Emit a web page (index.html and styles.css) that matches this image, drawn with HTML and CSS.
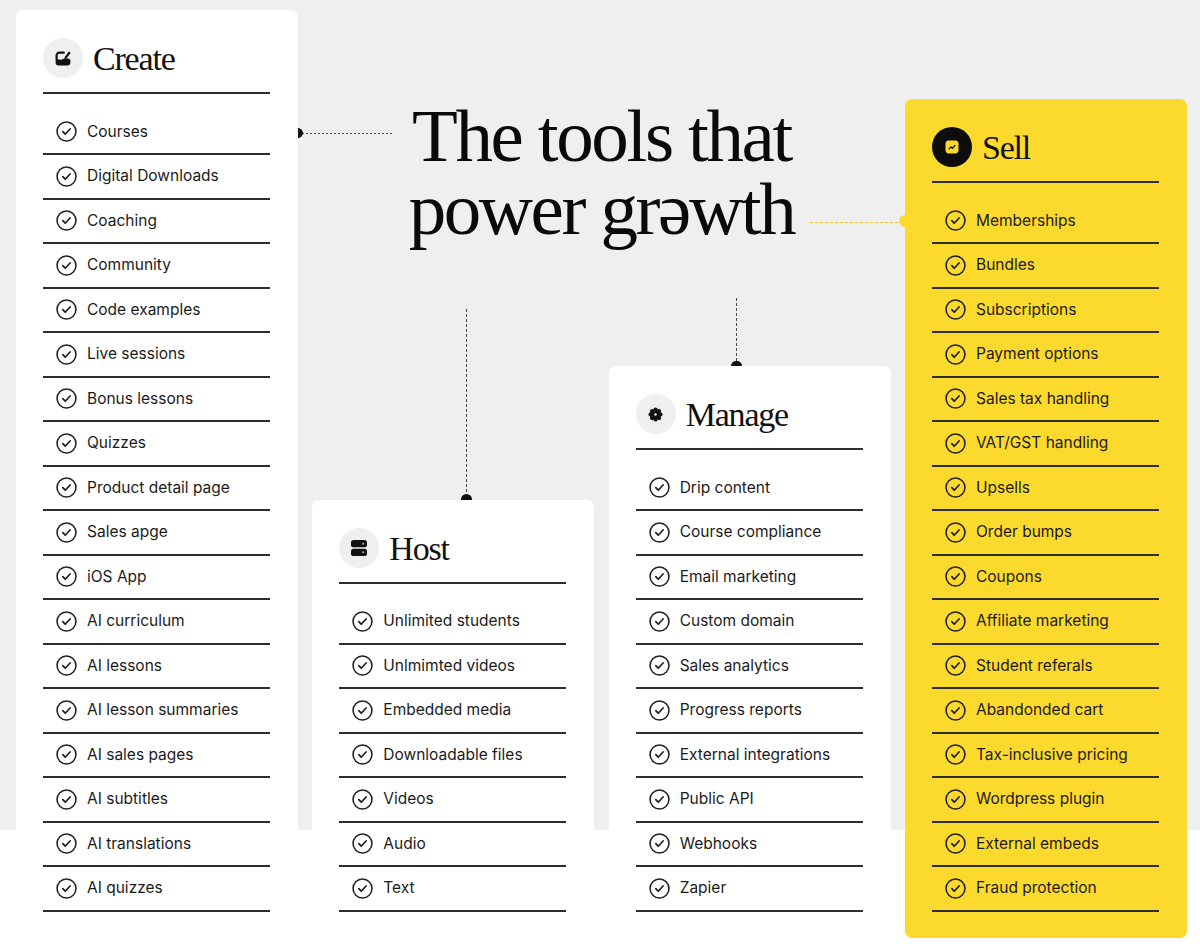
FILE: index.html
```html
<!DOCTYPE html>
<html lang="en">
<head>
<meta charset="utf-8">
<title>The tools that power growth</title>
<link rel="stylesheet" href="styles.css">
</head>
<body>
<svg class="defs" aria-hidden="true">
  <symbol id="chk" viewBox="0 0 20 20">
    <circle cx="10" cy="10" r="9" fill="none" stroke="currentColor" stroke-width="1.5"/>
    <path d="M6.5 10.2l2.3 2.4 4.6-5" fill="none" stroke="currentColor" stroke-width="1.7" stroke-linecap="round" stroke-linejoin="round"/>
  </symbol>
</svg>
<main class="board">
  <section class="card create">
    <header class="card-head">
      <span class="badge">
        <svg width="16" height="15" viewBox="0 0 16 15"><path d="M1.6 8.5V4.3a2.6 2.6 0 0 1 2.6-2.6h4.6" fill="none" stroke="#111" stroke-width="2.2" stroke-linecap="round"/><path d="M10.6 6.6L14.4 1.8" fill="none" stroke="#111" stroke-width="2.2" stroke-linecap="round"/><path d="M0.6 9.4c2.4-2.6 4.4 0.4 6.9-1.1s4.6-1.6 7.9 0.4v2.9a3 3 0 0 1-3 3H3.6a3 3 0 0 1-3-3z" fill="#111"/></svg>
      </span>
      <h2>Create</h2>
    </header>
    <ul class="list">
      <li class="item"><svg class="check"><use href="#chk"/></svg><span>Courses</span></li>
      <li class="item"><svg class="check"><use href="#chk"/></svg><span>Digital Downloads</span></li>
      <li class="item"><svg class="check"><use href="#chk"/></svg><span>Coaching</span></li>
      <li class="item"><svg class="check"><use href="#chk"/></svg><span>Community</span></li>
      <li class="item"><svg class="check"><use href="#chk"/></svg><span>Code examples</span></li>
      <li class="item"><svg class="check"><use href="#chk"/></svg><span>Live sessions</span></li>
      <li class="item"><svg class="check"><use href="#chk"/></svg><span>Bonus lessons</span></li>
      <li class="item"><svg class="check"><use href="#chk"/></svg><span>Quizzes</span></li>
      <li class="item"><svg class="check"><use href="#chk"/></svg><span>Product detail page</span></li>
      <li class="item"><svg class="check"><use href="#chk"/></svg><span>Sales apge</span></li>
      <li class="item"><svg class="check"><use href="#chk"/></svg><span>iOS App</span></li>
      <li class="item"><svg class="check"><use href="#chk"/></svg><span>AI curriculum</span></li>
      <li class="item"><svg class="check"><use href="#chk"/></svg><span>AI lessons</span></li>
      <li class="item"><svg class="check"><use href="#chk"/></svg><span>AI lesson summaries</span></li>
      <li class="item"><svg class="check"><use href="#chk"/></svg><span>AI sales pages</span></li>
      <li class="item"><svg class="check"><use href="#chk"/></svg><span>AI subtitles</span></li>
      <li class="item"><svg class="check"><use href="#chk"/></svg><span>AI translations</span></li>
      <li class="item"><svg class="check"><use href="#chk"/></svg><span>AI quizzes</span></li>
    </ul>
  </section>

  <h1 class="headline"><span class="hl-line">The tools that</span><span class="hl-line">power grəwth</span></h1>

  <section class="card host">
    <header class="card-head">
      <span class="badge">
        <svg width="18" height="18" viewBox="0 0 18 18"><rect x="1" y="1" width="16" height="7.3" rx="2.6" fill="#111"/><rect x="1" y="9.7" width="16" height="7.3" rx="2.6" fill="#111"/><circle cx="13.2" cy="4.65" r="1" fill="#bdbdbd"/><circle cx="13.2" cy="13.35" r="1" fill="#bdbdbd"/></svg>
      </span>
      <h2>Host</h2>
    </header>
    <ul class="list">
      <li class="item"><svg class="check"><use href="#chk"/></svg><span>Unlimited students</span></li>
      <li class="item"><svg class="check"><use href="#chk"/></svg><span>Unlmimted videos</span></li>
      <li class="item"><svg class="check"><use href="#chk"/></svg><span>Embedded media</span></li>
      <li class="item"><svg class="check"><use href="#chk"/></svg><span>Downloadable files</span></li>
      <li class="item"><svg class="check"><use href="#chk"/></svg><span>Videos</span></li>
      <li class="item"><svg class="check"><use href="#chk"/></svg><span>Audio</span></li>
      <li class="item"><svg class="check"><use href="#chk"/></svg><span>Text</span></li>
    </ul>
  </section>

  <section class="card manage">
    <header class="card-head">
      <span class="badge">
        <svg width="15" height="15" viewBox="0 0 16 16"><g fill="#111"><circle cx="8" cy="8" r="4.8"/><circle cx="8" cy="2.8" r="2.3"/><circle cx="8" cy="13.2" r="2.3"/><circle cx="2.8" cy="8" r="2.3"/><circle cx="13.2" cy="8" r="2.3"/><circle cx="4.3" cy="4.3" r="2.3"/><circle cx="11.7" cy="4.3" r="2.3"/><circle cx="4.3" cy="11.7" r="2.3"/><circle cx="11.7" cy="11.7" r="2.3"/></g><circle cx="8" cy="8" r="1.3" fill="#efefef"/></svg>
      </span>
      <h2>Manage</h2>
    </header>
    <ul class="list">
      <li class="item"><svg class="check"><use href="#chk"/></svg><span>Drip content</span></li>
      <li class="item"><svg class="check"><use href="#chk"/></svg><span>Course compliance</span></li>
      <li class="item"><svg class="check"><use href="#chk"/></svg><span>Email marketing</span></li>
      <li class="item"><svg class="check"><use href="#chk"/></svg><span>Custom domain</span></li>
      <li class="item"><svg class="check"><use href="#chk"/></svg><span>Sales analytics</span></li>
      <li class="item"><svg class="check"><use href="#chk"/></svg><span>Progress reports</span></li>
      <li class="item"><svg class="check"><use href="#chk"/></svg><span>External integrations</span></li>
      <li class="item"><svg class="check"><use href="#chk"/></svg><span>Public API</span></li>
      <li class="item"><svg class="check"><use href="#chk"/></svg><span>Webhooks</span></li>
      <li class="item"><svg class="check"><use href="#chk"/></svg><span>Zapier</span></li>
    </ul>
  </section>

  <section class="card sell">
    <header class="card-head">
      <span class="badge dark">
        <svg width="14" height="14" viewBox="0 0 14 14"><rect x="0.5" y="0.5" width="13" height="13" rx="3.4" fill="#fcd92d"/><path d="M4 8.9l2-1.9 1.5 1.2L10 5.4" fill="none" stroke="#111" stroke-width="1.3" stroke-linecap="round" stroke-linejoin="round"/></svg>
      </span>
      <h2>Sell</h2>
    </header>
    <ul class="list">
      <li class="item"><svg class="check"><use href="#chk"/></svg><span>Memberships</span></li>
      <li class="item"><svg class="check"><use href="#chk"/></svg><span>Bundles</span></li>
      <li class="item"><svg class="check"><use href="#chk"/></svg><span>Subscriptions</span></li>
      <li class="item"><svg class="check"><use href="#chk"/></svg><span>Payment options</span></li>
      <li class="item"><svg class="check"><use href="#chk"/></svg><span>Sales tax handling</span></li>
      <li class="item"><svg class="check"><use href="#chk"/></svg><span>VAT/GST handling</span></li>
      <li class="item"><svg class="check"><use href="#chk"/></svg><span>Upsells</span></li>
      <li class="item"><svg class="check"><use href="#chk"/></svg><span>Order bumps</span></li>
      <li class="item"><svg class="check"><use href="#chk"/></svg><span>Coupons</span></li>
      <li class="item"><svg class="check"><use href="#chk"/></svg><span>Affiliate marketing</span></li>
      <li class="item"><svg class="check"><use href="#chk"/></svg><span>Student referals</span></li>
      <li class="item"><svg class="check"><use href="#chk"/></svg><span>Abandonded cart</span></li>
      <li class="item"><svg class="check"><use href="#chk"/></svg><span>Tax-inclusive pricing</span></li>
      <li class="item"><svg class="check"><use href="#chk"/></svg><span>Wordpress plugin</span></li>
      <li class="item"><svg class="check"><use href="#chk"/></svg><span>External embeds</span></li>
      <li class="item"><svg class="check"><use href="#chk"/></svg><span>Fraud protection</span></li>
    </ul>
  </section>
</main>
</body>
</html>
```

FILE: styles.css
```css
html {
  min-height: 100%;
  background: #ffffff;
}

html, body {
  margin: 0;
  padding: 0;
}

body {
  background: #ffffff linear-gradient(to bottom, #efefef 0, #efefef 830px, #ffffff 830px) no-repeat 0 0 / 100% 830px;
  font-family: Inter, "Noto Sans", "Liberation Sans", sans-serif;
  color: #1b1b1b;
}

.defs {
  position: absolute;
  width: 0;
  height: 0;
  overflow: hidden;
}

.board {
  display: grid;
  grid-template-columns: repeat(4, 282px);
  grid-template-rows: auto 1fr;
  column-gap: 14.33px;
  row-gap: 0;
  padding: 10px 0 0 16px;
}

.card {
  position: relative;
  background: #ffffff;
  border-radius: 7px;
  padding: 28px 28px 26px 27px;
  align-self: end;
}

.create {
  grid-column: 1;
  grid-row: 1 / 3;
}

.host {
  grid-column: 2;
  grid-row: 2;
}

.manage {
  grid-column: 3;
  grid-row: 2;
}

.sell {
  grid-column: 4;
  grid-row: 1 / 3;
  background: #fcd92d;
}

/* headline */
.headline {
  grid-column: 2 / 4;
  grid-row: 1;
  position: relative;
  margin: 89px 0 0;
  text-align: center;
  font-family: "Liberation Serif", "DejaVu Serif", serif;
  font-weight: 400;
  font-size: 75px;
  letter-spacing: -2.4px;
  color: #0a0a0a;
}

.hl-line {
  display: block;
  height: 73px;
  line-height: 73px;
}

/* connector from Create card */
.headline::before {
  content: "";
  position: absolute;
  left: -14px;
  top: 29px;
  width: 95px;
  height: 10px;
  background:
    radial-gradient(circle at 0 5px, #111 0 4.6px, transparent 5.2px) 0 0 / 6px 10px no-repeat,
    repeating-linear-gradient(to right, #444 0 2px, transparent 2px 4px) 0 4.5px / 100% 1px no-repeat;
}

/* connector to Sell card */
.headline::after {
  content: "";
  position: absolute;
  left: 498px;
  top: 123px;
  width: 93px;
  height: 1px;
  background: repeating-linear-gradient(to right, #f0c62a 0 3px, transparent 3px 5px);
}

.sell::before {
  content: "";
  position: absolute;
  left: -6px;
  top: 115.5px;
  width: 6px;
  height: 12px;
  border-radius: 6px 0 0 6px;
  background: #fcd92d;
}

/* vertical connectors */
.host::before,
.manage::before {
  content: "";
  position: absolute;
  bottom: calc(100% + 5px);
  width: 1px;
  background: repeating-linear-gradient(to bottom, #4a4a4a 0 3px, transparent 3px 5px);
}

.host::after,
.manage::after {
  content: "";
  position: absolute;
  top: -5.5px;
  width: 11px;
  height: 5.5px;
  border-radius: 6px 6px 0 0;
  background: #111;
}

.host::before {
  left: 153.5px;
  height: 186px;
}

.host::after {
  left: 148.5px;
}

.manage::before {
  left: 127.3px;
  height: 63px;
}

.manage::after {
  left: 122.3px;
}

/* card header */
.card-head {
  display: flex;
  align-items: center;
  gap: 10px;
  padding-bottom: 14px;
  border-bottom: 2px solid #2e2e2e;
}

.badge {
  flex: none;
  width: 40px;
  height: 40px;
  border-radius: 50%;
  background: #efefef;
  display: flex;
  align-items: center;
  justify-content: center;
}

.badge.dark {
  background: #0d0d0d;
}

.card-head h2 {
  margin: 0;
  padding-top: 2px;
  font-family: "Liberation Serif", "DejaVu Serif", serif;
  font-weight: 400;
  font-size: 34px;
  line-height: 38px;
  letter-spacing: -1.2px;
  color: #111;
}

/* list */
.list {
  list-style: none;
  margin: 0;
  padding: 16.5px 0 0;
}

.item {
  box-sizing: border-box;
  height: 44.5px;
  display: flex;
  align-items: center;
  gap: 10px;
  padding-left: 13px;
  border-bottom: 2px solid #2e2e2e;
  font-size: 15.5px;
  line-height: 20px;
  color: #1b1b1b;
}

.check {
  flex: none;
  width: 21px;
  height: 21px;
  color: #222;
}
```
